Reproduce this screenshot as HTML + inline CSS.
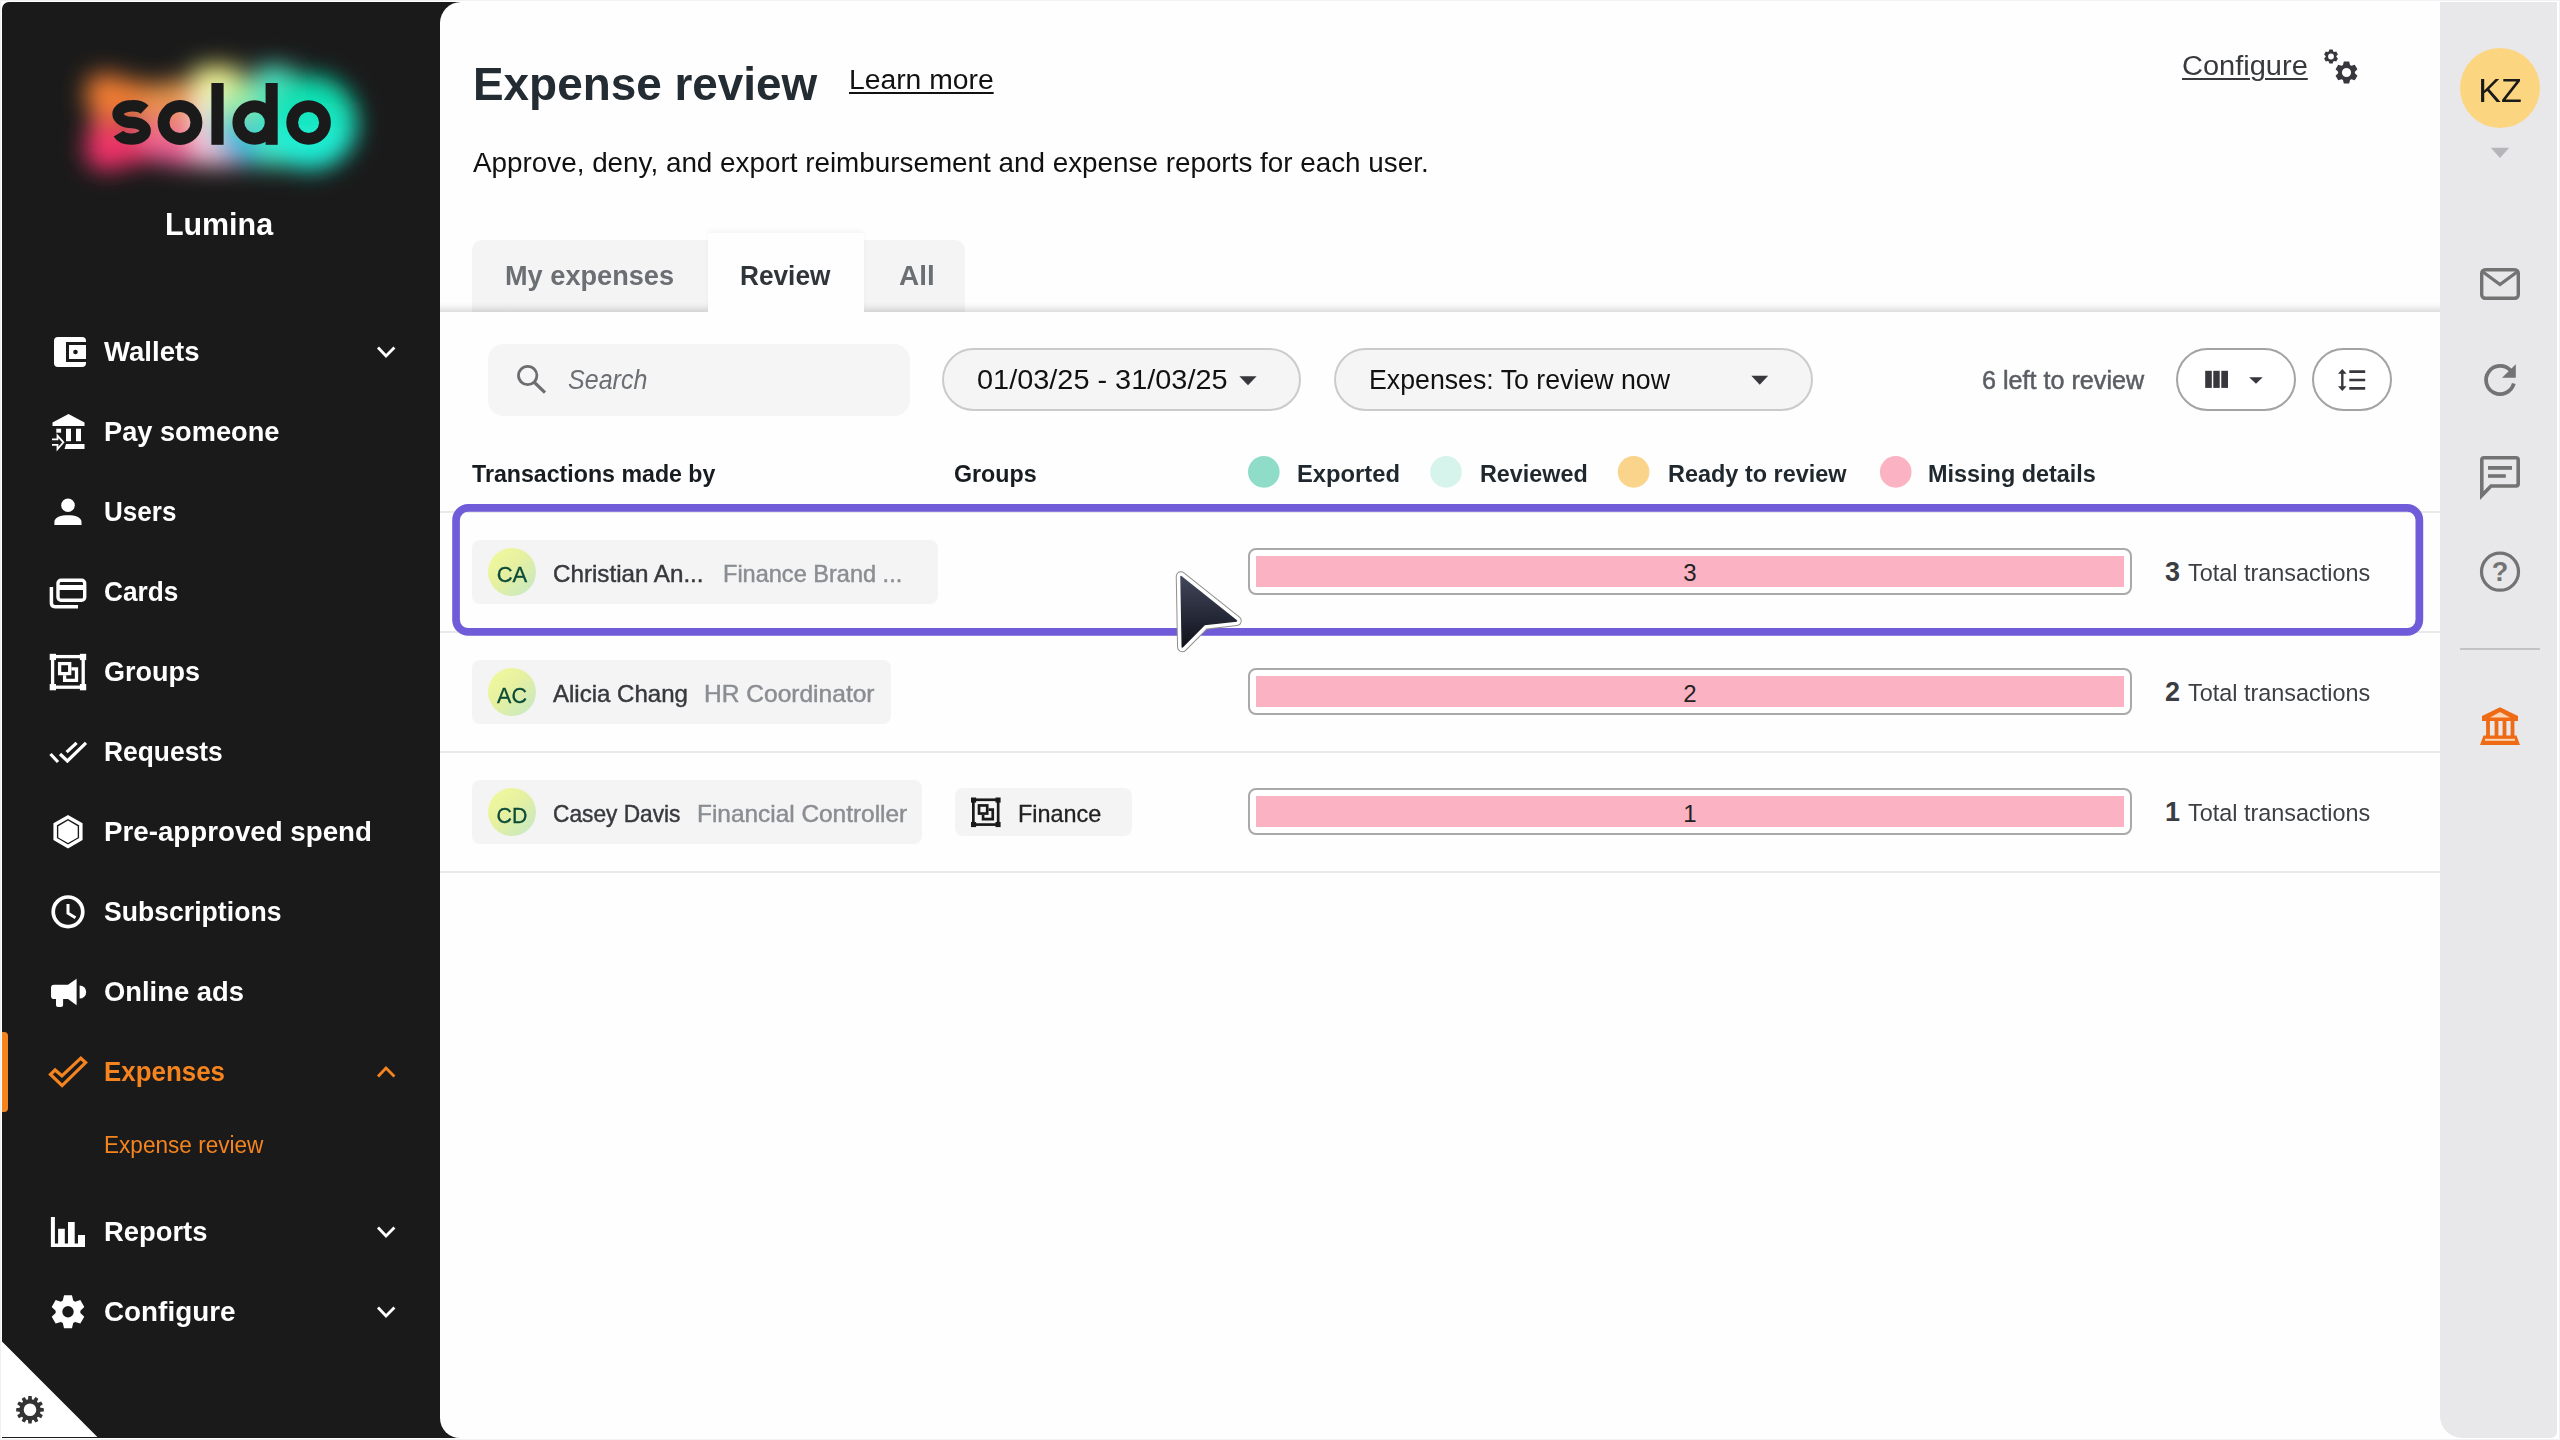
<!DOCTYPE html>
<html><head><meta charset="utf-8">
<style>
*{box-sizing:border-box;margin:0;padding:0}
html,body{width:2560px;height:1440px;overflow:hidden;background:#f1f1f3;font-family:"Liberation Sans",sans-serif}
.a{position:absolute}
.t{position:absolute;line-height:1;white-space:nowrap}
svg{position:absolute;left:0;top:0;overflow:visible}
</style></head><body>
<div class="a" style="left:1px;top:1px;width:2558px;height:1438px;background:#fff"></div>
<div class="a" style="left:2px;top:2px;width:480px;height:1435.5px;background:#1a1a1a;border-top-left-radius:7px"></div>
<div class="a" style="left:440px;top:2px;width:2060px;height:1435.5px;background:#fefefe;border-radius:21px 0 0 20px"></div>
<div class="a" style="left:2440px;top:2px;width:116.5px;height:1435.5px;background:#e8e8ea;border-radius:0 0 6px 22px"></div>
<svg width="480" height="300" style="left:0;top:0">
<defs>
<filter id="gb" x="-50%" y="-50%" width="200%" height="200%"><feGaussianBlur stdDeviation="11.5"/></filter>
<linearGradient id="g1" x1="0" y1="0" x2="0" y2="1"><stop offset="0" stop-color="#f08030"/><stop offset="1" stop-color="#f0306a"/></linearGradient>
<linearGradient id="g2" x1="0" y1="0" x2="0" y2="1"><stop offset="0" stop-color="#e89848"/><stop offset="1" stop-color="#f0609a"/></linearGradient>
<linearGradient id="g3" x1="0" y1="0" x2="0" y2="1"><stop offset="0" stop-color="#f0f070"/><stop offset="0.5" stop-color="#f4f0f0"/><stop offset="1" stop-color="#f0b0d0"/></linearGradient>
<linearGradient id="g4" x1="0" y1="0" x2="0" y2="1"><stop offset="0" stop-color="#a0f0a0"/><stop offset="1" stop-color="#30b0e0"/></linearGradient>
<linearGradient id="g5" x1="0" y1="0" x2="0" y2="1"><stop offset="0" stop-color="#10e0b0"/><stop offset="1" stop-color="#20f0d8"/></linearGradient>
</defs>
<g filter="url(#gb)">
<rect x="86" y="74" width="40" height="40" rx="14" fill="#f07a30"/>
<rect x="86" y="122" width="42" height="48" rx="16" fill="#f0306a"/>
<path d="M144.6,109.6 A14,8.4 0 0,0 132,105.7 A14,8.4 0 0,0 118,114.1 A14,8.4 0 0,0 132,122.5 A13.7,8.3 0 0,1 145.2,130.8 A13.7,8.3 0 0,1 131.5,139.1 A13.7,8.3 0 0,1 118.6,133.6" fill="none" stroke="url(#g1)" stroke-width="50"/>
<circle cx="180" cy="122.5" r="21" fill="none" stroke="url(#g2)" stroke-width="44"/>
<rect x="194" y="66" width="46" height="100" fill="url(#g3)"/>
<circle cx="254.5" cy="122.5" r="21" fill="none" stroke="url(#g4)" stroke-width="44"/>
<rect x="255" y="66" width="38" height="100" fill="#50e0c0"/>
<circle cx="310" cy="122.5" r="24" fill="none" stroke="url(#g5)" stroke-width="46"/>
</g></svg>
<div class="t" style="left:68.50px;top:209.35px;width:300px;text-align:center;font-size:31px;font-weight:bold;color:#fff;font-style:normal;transform:scaleX(0.9818);transform-origin:center top;">Lumina</div>
<div class="t" style="left:104.00px;top:338.46px;font-size:27.8px;font-weight:bold;color:#fff;font-style:normal;transform:scaleX(0.9914);transform-origin:left top;">Wallets</div>
<div class="t" style="left:104.00px;top:418.46px;font-size:27.8px;font-weight:bold;color:#fff;font-style:normal;transform:scaleX(0.9789);transform-origin:left top;">Pay someone</div>
<div class="t" style="left:104.00px;top:498.46px;font-size:27.8px;font-weight:bold;color:#fff;font-style:normal;transform:scaleX(0.9366);transform-origin:left top;">Users</div>
<div class="t" style="left:104.00px;top:578.46px;font-size:27.8px;font-weight:bold;color:#fff;font-style:normal;transform:scaleX(0.9440);transform-origin:left top;">Cards</div>
<div class="t" style="left:104.00px;top:658.46px;font-size:27.8px;font-weight:bold;color:#fff;font-style:normal;transform:scaleX(0.9715);transform-origin:left top;">Groups</div>
<div class="t" style="left:104.00px;top:738.46px;font-size:27.8px;font-weight:bold;color:#fff;font-style:normal;transform:scaleX(0.9493);transform-origin:left top;">Requests</div>
<div class="t" style="left:104.00px;top:818.46px;font-size:27.8px;font-weight:bold;color:#fff;font-style:normal;transform:scaleX(0.9970);transform-origin:left top;">Pre-approved spend</div>
<div class="t" style="left:104.00px;top:898.46px;font-size:27.8px;font-weight:bold;color:#fff;font-style:normal;transform:scaleX(0.9574);transform-origin:left top;">Subscriptions</div>
<div class="t" style="left:104.00px;top:978.46px;font-size:27.8px;font-weight:bold;color:#fff;font-style:normal;transform:scaleX(0.9847);transform-origin:left top;">Online ads</div>
<div class="t" style="left:104.00px;top:1058.46px;font-size:27.8px;font-weight:bold;color:#f5841f;font-style:normal;transform:scaleX(0.9319);transform-origin:left top;">Expenses</div>
<div class="t" style="left:103.50px;top:1134.10px;font-size:23.5px;font-weight:normal;color:#f5841f;font-style:normal;transform:scaleX(0.9607);transform-origin:left top;">Expense review</div>
<div class="t" style="left:104.00px;top:1218.46px;font-size:27.8px;font-weight:bold;color:#fff;font-style:normal;transform:scaleX(0.9849);transform-origin:left top;">Reports</div>
<div class="t" style="left:104.00px;top:1298.46px;font-size:27.8px;font-weight:bold;color:#fff;font-style:normal;transform:scaleX(1.0016);transform-origin:left top;">Configure</div>
<div class="a" style="left:2px;top:1032px;width:6px;height:80px;background:#f5841f;border-radius:0 4px 4px 0"></div>
<div class="t" style="left:472.50px;top:60.85px;font-size:46px;font-weight:bold;color:#232b33;font-style:normal;transform:scaleX(0.9973);transform-origin:left top;">Expense review</div>
<div class="t" style="left:849.00px;top:67.34px;font-size:27px;font-weight:normal;color:#111;font-style:normal;transform:scaleX(1.0477);transform-origin:left top;text-decoration:underline;text-decoration-thickness:2px;text-underline-offset:3px">Learn more</div>
<div class="t" style="left:473.00px;top:148.70px;font-size:27.4px;font-weight:normal;color:#111;font-style:normal;transform:scaleX(1.0162);transform-origin:left top;">Approve, deny, and export reimbursement and expense reports for each user.</div>
<div class="t" style="left:2182.30px;top:52.74px;font-size:27px;font-weight:normal;color:#37393c;font-style:normal;transform:scaleX(1.0743);transform-origin:left top;text-decoration:underline;text-decoration-thickness:2px;text-underline-offset:3px">Configure</div>
<div class="a" style="left:472px;top:240px;width:236px;height:72px;background:#f4f4f5;border-top-left-radius:10px"></div>
<div class="a" style="left:864px;top:240px;width:101px;height:72px;background:#f4f4f5;border-top-right-radius:10px"></div>
<div class="a" style="left:440px;top:302px;width:2000px;height:10px;background:linear-gradient(to bottom, rgba(0,0,0,0) 0%, rgba(0,0,0,0.03) 40%, rgba(0,0,0,0.13) 100%)"></div>
<div class="a" style="left:708px;top:233px;width:156px;height:79px;background:#fefefe;box-shadow:0 -3px 5px rgba(0,0,0,0.035)"></div>
<div class="t" style="left:505.20px;top:262.32px;font-size:27.5px;font-weight:bold;color:#6b6e73;font-style:normal;transform:scaleX(0.9876);transform-origin:left top;">My expenses</div>
<div class="t" style="left:740.00px;top:262.32px;font-size:27.5px;font-weight:bold;color:#30353a;font-style:normal;transform:scaleX(0.9536);transform-origin:left top;">Review</div>
<div class="t" style="left:899.40px;top:262.32px;font-size:27.5px;font-weight:bold;color:#6b6e73;font-style:normal;transform:scaleX(1.0149);transform-origin:left top;">All</div>
<div class="a" style="left:488px;top:344px;width:422px;height:72px;background:#f5f5f6;border-radius:16px"></div>
<div class="t" style="left:568.00px;top:366.81px;font-size:26.8px;font-weight:normal;color:#6b6e72;font-style:italic;transform:scaleX(0.9345);transform-origin:left top;">Search</div>
<div class="a" style="left:942px;top:348px;width:359px;height:63px;background:#f5f5f6;border:2px solid #cbcbcb;border-radius:32px"></div>
<div class="t" style="left:977.00px;top:366.54px;font-size:27px;font-weight:normal;color:#111;font-style:normal;transform:scaleX(1.0699);transform-origin:left top;">01/03/25 - 31/03/25</div>
<div class="a" style="left:1334px;top:348px;width:479px;height:63px;background:#f5f5f6;border:2px solid #cbcbcb;border-radius:32px"></div>
<div class="t" style="left:1368.80px;top:366.94px;font-size:27px;font-weight:normal;color:#111;font-style:normal;transform:scaleX(0.9896);transform-origin:left top;">Expenses: To review now</div>
<div class="t" style="left:1982.00px;top:368.01px;font-size:25.5px;font-weight:normal;color:#5a5e63;font-style:normal;transform:scaleX(0.9860);transform-origin:left top;-webkit-text-stroke:0.5px #5a5e63">6 left to review</div>
<div class="a" style="left:2176px;top:348px;width:120px;height:63px;background:#fff;border:2px solid #a3a3a3;border-radius:32px"></div>
<div class="a" style="left:2312px;top:348px;width:80px;height:63px;background:#fff;border:2px solid #a3a3a3;border-radius:32px"></div>
<div class="t" style="left:472.30px;top:461.97px;font-size:24.6px;font-weight:bold;color:#161c20;font-style:normal;transform:scaleX(0.9422);transform-origin:left top;">Transactions made by</div>
<div class="t" style="left:954.00px;top:461.97px;font-size:24.6px;font-weight:bold;color:#161c20;font-style:normal;transform:scaleX(0.9444);transform-origin:left top;">Groups</div>
<div class="t" style="left:1297.00px;top:461.97px;font-size:24.6px;font-weight:bold;color:#1f282e;font-style:normal;transform:scaleX(0.9659);transform-origin:left top;">Exported</div>
<div class="t" style="left:1479.70px;top:461.97px;font-size:24.6px;font-weight:bold;color:#1f282e;font-style:normal;transform:scaleX(0.9494);transform-origin:left top;">Reviewed</div>
<div class="t" style="left:1667.80px;top:461.97px;font-size:24.6px;font-weight:bold;color:#1f282e;font-style:normal;transform:scaleX(0.9533);transform-origin:left top;">Ready to review</div>
<div class="t" style="left:1928.00px;top:461.97px;font-size:24.6px;font-weight:bold;color:#1f282e;font-style:normal;transform:scaleX(0.9523);transform-origin:left top;">Missing details</div>
<div class="a" style="left:440px;top:511px;width:2000px;height:2px;background:#e9e9ea"></div>
<div class="a" style="left:440px;top:631px;width:2000px;height:2px;background:#e9e9ea"></div>
<div class="a" style="left:440px;top:751px;width:2000px;height:2px;background:#e9e9ea"></div>
<div class="a" style="left:440px;top:871px;width:2000px;height:2px;background:#e9e9ea"></div>
<div class="a" style="left:472px;top:540px;width:466px;height:64px;background:#f4f4f5;border-radius:8px"></div>
<div class="a" style="left:488px;top:547.5px;width:48px;height:48px;border-radius:50%;background:linear-gradient(135deg,#f3fa9c 0%,#e6f0a0 45%,#c2e8c8 100%)"></div>
<div class="t" style="left:482.10px;top:564.45px;width:60px;text-align:center;font-size:22.5px;font-weight:normal;color:#0b4a37;font-style:normal;transform:scaleX(0.9786);transform-origin:center top;-webkit-text-stroke:0.3px #0b4a37">CA</div>
<div class="t" style="left:553.30px;top:561.78px;font-size:24px;font-weight:normal;color:#37393d;font-style:normal;transform:scaleX(1.0077);transform-origin:left top;-webkit-text-stroke:0.45px #37393d">Christian An...</div>
<div class="t" style="left:722.80px;top:561.78px;font-size:24px;font-weight:normal;color:#8a8d91;font-style:normal;transform:scaleX(0.9806);transform-origin:left top;-webkit-text-stroke:0.45px #8a8d91">Finance Brand ...</div>
<div class="a" style="left:1248px;top:548px;width:884px;height:47px;background:#fff;border:2px solid #a9a9a9;border-radius:8px"></div>
<div class="a" style="left:1256px;top:556px;width:868px;height:31px;background:#fbb2c3"></div>
<div class="t" style="left:1660.00px;top:561.18px;width:60px;text-align:center;font-size:24px;font-weight:normal;color:#222;font-style:normal;">3</div>
<div class="t" style="left:2165.00px;top:558.84px;font-size:27px;font-weight:bold;color:#3a3d41;font-style:normal;">3</div>
<div class="t" style="left:2188.00px;top:560.96px;font-size:24.5px;font-weight:normal;color:#3c3f43;font-style:normal;transform:scaleX(0.9559);transform-origin:left top;">Total transactions</div>
<div class="a" style="left:472px;top:660px;width:419px;height:64px;background:#f4f4f5;border-radius:8px"></div>
<div class="a" style="left:488px;top:667.9px;width:48px;height:48px;border-radius:50%;background:linear-gradient(135deg,#f3fa9c 0%,#e6f0a0 45%,#c2e8c8 100%)"></div>
<div class="t" style="left:482.10px;top:684.80px;width:60px;text-align:center;font-size:22.5px;font-weight:normal;color:#0b4a37;font-style:normal;transform:scaleX(0.9546);transform-origin:center top;-webkit-text-stroke:0.3px #0b4a37">AC</div>
<div class="t" style="left:552.50px;top:682.13px;font-size:24px;font-weight:normal;color:#37393d;font-style:normal;transform:scaleX(1.0008);transform-origin:left top;-webkit-text-stroke:0.45px #37393d">Alicia Chang</div>
<div class="t" style="left:703.70px;top:682.13px;font-size:24px;font-weight:normal;color:#8a8d91;font-style:normal;transform:scaleX(1.0227);transform-origin:left top;-webkit-text-stroke:0.45px #8a8d91">HR Coordinator</div>
<div class="a" style="left:1248px;top:668px;width:884px;height:47px;background:#fff;border:2px solid #a9a9a9;border-radius:8px"></div>
<div class="a" style="left:1256px;top:676px;width:868px;height:31px;background:#fbb2c3"></div>
<div class="t" style="left:1660.00px;top:681.53px;width:60px;text-align:center;font-size:24px;font-weight:normal;color:#222;font-style:normal;">2</div>
<div class="t" style="left:2165.00px;top:679.19px;font-size:27px;font-weight:bold;color:#3a3d41;font-style:normal;">2</div>
<div class="t" style="left:2188.00px;top:681.31px;font-size:24.5px;font-weight:normal;color:#3c3f43;font-style:normal;transform:scaleX(0.9559);transform-origin:left top;">Total transactions</div>
<div class="a" style="left:472px;top:780px;width:450px;height:64px;background:#f4f4f5;border-radius:8px"></div>
<div class="a" style="left:488px;top:788.0px;width:48px;height:48px;border-radius:50%;background:linear-gradient(135deg,#f3fa9c 0%,#e6f0a0 45%,#c2e8c8 100%)"></div>
<div class="t" style="left:482.10px;top:804.95px;width:60px;text-align:center;font-size:22.5px;font-weight:normal;color:#0b4a37;font-style:normal;transform:scaleX(0.9472);transform-origin:center top;-webkit-text-stroke:0.3px #0b4a37">CD</div>
<div class="t" style="left:552.50px;top:802.28px;font-size:24px;font-weight:normal;color:#37393d;font-style:normal;transform:scaleX(0.9461);transform-origin:left top;-webkit-text-stroke:0.45px #37393d">Casey Davis</div>
<div class="t" style="left:696.70px;top:802.28px;font-size:24px;font-weight:normal;color:#8a8d91;font-style:normal;transform:scaleX(1.0167);transform-origin:left top;-webkit-text-stroke:0.45px #8a8d91">Financial Controller</div>
<div class="a" style="left:955px;top:788px;width:177px;height:48px;background:#f4f4f5;border-radius:8px"></div>
<div class="t" style="left:1018.40px;top:802.28px;font-size:24px;font-weight:normal;color:#222;font-style:normal;transform:scaleX(0.9758);transform-origin:left top;-webkit-text-stroke:0.3px #222">Finance</div>
<div class="a" style="left:1248px;top:788px;width:884px;height:47px;background:#fff;border:2px solid #a9a9a9;border-radius:8px"></div>
<div class="a" style="left:1256px;top:796px;width:868px;height:31px;background:#fbb2c3"></div>
<div class="t" style="left:1660.00px;top:801.68px;width:60px;text-align:center;font-size:24px;font-weight:normal;color:#222;font-style:normal;">1</div>
<div class="t" style="left:2165.00px;top:799.34px;font-size:27px;font-weight:bold;color:#3a3d41;font-style:normal;">1</div>
<div class="t" style="left:2188.00px;top:801.46px;font-size:24.5px;font-weight:normal;color:#3c3f43;font-style:normal;transform:scaleX(0.9559);transform-origin:left top;">Total transactions</div>
<div class="a" style="left:2460px;top:48px;width:80px;height:80px;border-radius:50%;background:#fcd581"></div>
<div class="t" style="left:2449.90px;top:73.21px;width:100px;text-align:center;font-size:34px;font-weight:normal;color:#1a1a1a;font-style:normal;transform:scaleX(1.0030);transform-origin:center top;">KZ</div>
<div class="t" style="left:2480.00px;top:559.14px;width:40px;text-align:center;font-size:27px;font-weight:bold;color:#737373;font-style:normal;">?</div>
<div class="a" style="left:2460px;top:648px;width:80px;height:2px;background:#c3c3c6"></div>
<svg width="2560" height="1440"><path fill="none" stroke="#1a1a1a" stroke-width="11.4" stroke-linecap="butt" d="M144.6,109.6 A14,8.4 0 0,0 132,105.7 A14,8.4 0 0,0 118,114.1 A14,8.4 0 0,0 132,122.5 A13.7,8.3 0 0,1 145.2,130.8 A13.7,8.3 0 0,1 131.5,139.1 A13.7,8.3 0 0,1 118.6,133.6"/><circle cx="180" cy="122.5" r="16.45" fill="none" stroke="#1a1a1a" stroke-width="11.9"/><rect x="211.4" y="83" width="12.2" height="61.8" fill="#1a1a1a"/><circle cx="254.6" cy="122.5" r="16.2" fill="none" stroke="#1a1a1a" stroke-width="12"/><rect x="265.6" y="83" width="12.1" height="61.8" fill="#1a1a1a"/><circle cx="308.6" cy="122.5" r="16.4" fill="none" stroke="#1a1a1a" stroke-width="11.8"/><path fill="none" stroke="#fff" stroke-width="2.8" d="M378,347.5 L386,356 L394.4,347.5"/><path fill="none" stroke="#fff" stroke-width="2.8" d="M378,1227.5 L386,1236 L394.4,1227.5"/><path fill="none" stroke="#fff" stroke-width="2.8" d="M378,1307.5 L386,1316 L394.4,1307.5"/><path fill="none" stroke="#f5841f" stroke-width="2.8" d="M378,1076.5 L386,1068 L394.4,1076.5"/><rect x="54" y="337" width="32" height="30" rx="4" fill="#fff"/><rect x="66" y="342" width="22" height="20" fill="#1a1a1a"/><rect x="69" y="345" width="17" height="14" fill="#fff"/><circle cx="75.5" cy="352" r="2.3" fill="#1a1a1a"/><path fill="#fff" d="M68.5,414 L84.5,422.5 L84.5,426 L52.5,426 L52.5,422.5 Z"/><rect x="56.3" y="428.7" width="4.8" height="4" fill="#fff"/><rect x="66" y="428.7" width="5" height="12.5" fill="#fff"/><rect x="76" y="428.7" width="5" height="12.5" fill="#fff"/><path fill="#fff" d="M66,444 L84.5,444 L84.5,449 L64.5,449 Z"/><path fill="none" stroke="#fff" stroke-width="1.8" d="M52,439.3 L57.5,439.3 L57.5,435.6 L63.4,442.3 L57.5,449 L57.5,444.8 L52,444.8"/><circle cx="68" cy="505.2" r="6.8" fill="#fff"/><path fill="#fff" d="M54.4,525 L54.4,522 C54.4,517 61,515.2 68,515.2 C75,515.2 81.5,517 81.5,522 L81.5,525 Z"/><rect x="58" y="580.2" width="26.7" height="20" rx="3" fill="none" stroke="#fff" stroke-width="3.4"/><rect x="59" y="585" width="25" height="5" fill="#fff"/><path fill="none" stroke="#fff" stroke-width="3.5" d="M51.4,587 L51.4,603 Q51.4,606.7 55,606.7 L78,606.7"/><rect x="52.6" y="656.6" width="30.6" height="30.6" fill="none" stroke="#fff" stroke-width="3.3"/><rect x="49.7" y="653.8" width="6.3" height="6.3" fill="#fff"/><rect x="79.9" y="653.8" width="6.3" height="6.3" fill="#fff"/><rect x="49.7" y="684" width="6.3" height="6.3" fill="#fff"/><rect x="79.9" y="684" width="6.3" height="6.3" fill="#fff"/><path fill="none" stroke="#fff" stroke-width="3.3" d="M71.4,668.8 L76.5,668.8 L76.5,680.4 L64.6,680.4 L64.6,675.3"/><rect x="59.6" y="663.6" width="10.1" height="10" fill="none" stroke="#fff" stroke-width="3.3"/><path fill="none" stroke="#fff" stroke-width="3.2" stroke-linecap="butt" d="M50.5,754 L58,762"/><path fill="none" stroke="#fff" stroke-width="3.2" d="M60,754 L67.4,761 L86,742.8"/><path fill="none" stroke="#fff" stroke-width="3.2" d="M66.6,752.2 L76.6,742.8"/><polygon points="68.00,816.90 80.82,824.30 80.82,839.10 68.00,846.50 55.18,839.10 55.18,824.30" fill="none" stroke="#fff" stroke-width="3.5"/><polygon points="68.00,820.60 77.70,826.20 77.70,837.40 68.00,843.00 58.30,837.40 58.30,826.20" fill="#fff"/><circle cx="68" cy="911.8" r="14.8" fill="none" stroke="#fff" stroke-width="3.7"/><path fill="none" stroke="#fff" stroke-width="3" d="M68,904 L68,913.2 L75.5,917.8"/><path fill="#fff" d="M54,984.7 L68,984.7 L76.6,978.8 L76.6,1005.2 L68,999.1 L63.1,999.1 L63.1,1005 Q63.1,1007 61,1007 L58,1007 Q56,1007 56,1005 L56,999.1 L54,999.1 Q51,999.1 51,996 L51,988 Q51,984.7 54,984.7 Z"/><path fill="#fff" d="M79.6,985.4 A6.6,6.6 0 0 1 79.6,998.6 Z"/><path fill="none" stroke="#f5841f" stroke-width="3.2" stroke-linejoin="miter" d="M50.5,1074.4 L55.1,1070 L61.9,1075.8 L80.8,1058.2 L85.6,1062.6 L62.1,1085.6 Z"/><path fill="#fff" d="M50.9,1216.9 L54.9,1216.9 L54.9,1243.5 L58.1,1243.5 L58.1,1228.7 L64.8,1228.7 L64.8,1243.5 L68,1243.5 L68,1221.9 L74.7,1221.9 L74.7,1243.5 L78,1243.5 L78,1235 L85,1235 L85,1246.9 L50.9,1246.9 Z"/><path fill-rule="evenodd" fill="#fff" d="M62.78,1300.55 L64.03,1295.27 L71.97,1295.27 L73.22,1300.55 L75.13,1301.65 L80.33,1300.10 L84.30,1306.97 L80.35,1310.70 L80.35,1312.90 L84.30,1316.63 L80.33,1323.50 L75.13,1321.95 L73.22,1323.05 L71.97,1328.33 L64.03,1328.33 L62.78,1323.05 L60.87,1321.95 L55.67,1323.50 L51.70,1316.63 L55.65,1312.90 L55.65,1310.70 L51.70,1306.97 L55.67,1300.10 L60.87,1301.65 Z M73.70,1311.80 A5.7,5.7 0 1,0 62.30,1311.80 A5.7,5.7 0 1,0 73.70,1311.80 Z"/><path fill="#fff" d="M2,1341.6 L97.4,1437 L2,1437 Z"/><path fill-rule="evenodd" fill="#333" d="M28.01,1399.39 L28.33,1396.00 L31.67,1396.00 L31.99,1399.39 L33.49,1399.79 L35.45,1397.01 L38.35,1398.68 L36.93,1401.78 L38.02,1402.87 L41.12,1401.45 L42.79,1404.35 L40.01,1406.31 L40.41,1407.81 L43.80,1408.13 L43.80,1411.47 L40.41,1411.79 L40.01,1413.29 L42.79,1415.25 L41.12,1418.15 L38.02,1416.73 L36.93,1417.82 L38.35,1420.92 L35.45,1422.59 L33.49,1419.81 L31.99,1420.21 L31.67,1423.60 L28.33,1423.60 L28.01,1420.21 L26.51,1419.81 L24.55,1422.59 L21.65,1420.92 L23.07,1417.82 L21.98,1416.73 L18.88,1418.15 L17.21,1415.25 L19.99,1413.29 L19.59,1411.79 L16.20,1411.47 L16.20,1408.13 L19.59,1407.81 L19.99,1406.31 L17.21,1404.35 L18.88,1401.45 L21.98,1402.87 L23.07,1401.78 L21.65,1398.68 L24.55,1397.01 L26.51,1399.79 Z M36.30,1409.80 A6.3,6.3 0 1,0 23.70,1409.80 A6.3,6.3 0 1,0 36.30,1409.80 Z"/><path fill-rule="evenodd" fill="#37373d" d="M2328.73,51.60 L2329.32,49.50 L2332.68,49.50 L2333.27,51.60 L2334.11,52.08 L2336.22,51.54 L2337.90,54.46 L2336.38,56.02 L2336.38,56.98 L2337.90,58.54 L2336.22,61.46 L2334.11,60.92 L2333.27,61.40 L2332.68,63.50 L2329.32,63.50 L2328.73,61.40 L2327.89,60.92 L2325.78,61.46 L2324.10,58.54 L2325.62,56.98 L2325.62,56.02 L2324.10,54.46 L2325.78,51.54 L2327.89,52.08 Z M2333.90,56.50 A2.9,2.9 0 1,0 2328.10,56.50 A2.9,2.9 0 1,0 2333.90,56.50 Z"/><path fill-rule="evenodd" fill="#37373d" d="M2342.96,64.88 L2343.84,61.41 L2349.16,61.41 L2350.04,64.88 L2351.33,65.63 L2354.77,64.65 L2357.43,69.26 L2354.87,71.75 L2354.87,73.25 L2357.43,75.74 L2354.77,80.35 L2351.33,79.37 L2350.04,80.12 L2349.16,83.59 L2343.84,83.59 L2342.96,80.12 L2341.67,79.37 L2338.23,80.35 L2335.57,75.74 L2338.13,73.25 L2338.13,71.75 L2335.57,69.26 L2338.23,64.65 L2341.67,65.63 Z M2351.10,72.50 A4.6,4.6 0 1,0 2341.90,72.50 A4.6,4.6 0 1,0 2351.10,72.50 Z"/><circle cx="527.7" cy="375.5" r="9.2" fill="none" stroke="#6b6d70" stroke-width="2.8"/><path d="M534.5,382.5 L545,392.6" stroke="#6b6d70" stroke-width="3.2"/><path d="M1239.4,376.3 L1256.6,376.3 L1248,385.2 Z" fill="#37373d"/><path d="M1751.3,375.8 L1768.2,375.8 L1759.75,384.8 Z" fill="#37373d"/><rect x="2205.2" y="370.8" width="6.6" height="17.1" fill="#37373d"/><rect x="2213.3" y="370.8" width="6.4" height="17.1" fill="#37373d"/><rect x="2221.3" y="370.8" width="6.7" height="17.1" fill="#37373d"/><path d="M2249.2,377.3 L2262.7,377.3 L2256,383.8 Z" fill="#37373d"/><path d="M2342.3,371 L2342.3,389" stroke="#37373d" stroke-width="2.4"/><path d="M2338,373.8 L2342.3,369 L2346.6,373.8 Z M2338,386.2 L2342.3,391 L2346.6,386.2 Z" fill="#37373d"/><path d="M2349.3,371.6 L2365.2,371.6 M2349.3,380 L2365.2,380 M2349.3,388.4 L2365.2,388.4" stroke="#37373d" stroke-width="2.6"/><circle cx="1263.8" cy="471.9" r="15.8" fill="#8fdcc8"/><circle cx="1446" cy="471.9" r="15.8" fill="#d6f4ec"/><circle cx="1633.6" cy="471.9" r="15.8" fill="#f9d48a"/><circle cx="1895.7" cy="471.9" r="15.8" fill="#fbb3c3"/><g transform="translate(971,797.5) scale(0.8108108108108109) translate(-49.7,-653.8)" fill="none" stroke="#1a1a1a"><rect x="52.6" y="656.6" width="30.6" height="30.6" stroke-width="3.3"/><rect x="49.7" y="653.8" width="6.3" height="6.3" fill="#1a1a1a" stroke="none"/><rect x="79.9" y="653.8" width="6.3" height="6.3" fill="#1a1a1a" stroke="none"/><rect x="49.7" y="684" width="6.3" height="6.3" fill="#1a1a1a" stroke="none"/><rect x="79.9" y="684" width="6.3" height="6.3" fill="#1a1a1a" stroke="none"/><path stroke-width="3.3" d="M71.4,668.8 L76.5,668.8 L76.5,680.4 L64.6,680.4 L64.6,675.3"/><rect x="59.6" y="663.6" width="10.1" height="10" stroke-width="3.3"/></g><rect x="456.05" y="507.85" width="1963.3" height="124.1" rx="12.2" fill="none" stroke="#705cd9" stroke-width="7.7"/><path d="M2490.8,147.8 L2509.2,147.8 L2500,158 Z" fill="#b5b5b9"/><rect x="2481.7" y="269.7" width="36.6" height="28.6" rx="3.5" fill="none" stroke="#737373" stroke-width="3.4"/><path d="M2483,272 L2500,284.5 L2517,272" fill="none" stroke="#737373" stroke-width="3.4"/><path d="M2513.8,383.6 A14.1,14.1 0 1 1 2510.6,370.5" fill="none" stroke="#737373" stroke-width="3.8"/><path d="M2502,377.7 L2515.8,377.7 L2515.8,364.2 Z" fill="#737373"/><path d="M2481.8,495.6 L2481.8,460 Q2481.8,457.8 2484,457.8 L2516,457.8 Q2518.2,457.8 2518.2,460 L2518.2,483.8 Q2518.2,486 2516,486 L2491,486 Z" fill="none" stroke="#737373" stroke-width="3.6" stroke-linejoin="miter"/><rect x="2488" y="466" width="24" height="3.8" fill="#737373"/><rect x="2488" y="474.2" width="17.8" height="3.6" fill="#737373"/><circle cx="2500" cy="571.7" r="18.5" fill="none" stroke="#737373" stroke-width="3.2"/><path d="M2500,707.2 L2518,716 L2518,721 L2482,721 L2482,716 Z" fill="#ee6a15"/><path d="M2500,712 L2490,717.5 L2510,717.5 Z" fill="#fbd5b5"/><rect x="2486.1" y="720" width="3.8" height="16" fill="#ee6a15"/><rect x="2494.6" y="720" width="3.8" height="16" fill="#ee6a15"/><rect x="2502.6" y="720" width="3.8" height="16" fill="#ee6a15"/><rect x="2510.6" y="720" width="3.8" height="16" fill="#ee6a15"/><path d="M2483.5,735.5 L2516.5,735.5 L2520,745 L2480,745 Z" fill="#ee6a15"/><rect x="2485" y="738.8" width="30" height="2" fill="#fbd5b5"/><defs><linearGradient id="cg" x1="0" y1="0" x2="0" y2="1"><stop offset="0" stop-color="#41465a"/><stop offset="1" stop-color="#10121b"/></linearGradient></defs><path d="M1181,576.5 L1182.3,647 L1204.6,624.5 L1236.5,620.9 Z" fill="#8f8f8f" stroke="#8f8f8f" stroke-width="10.5" stroke-linejoin="round"/><path d="M1181,576.5 L1182.3,647 L1204.6,624.5 L1236.5,620.9 Z" fill="#fff" stroke="#fff" stroke-width="8.5" stroke-linejoin="round"/><path d="M1181,576.5 L1182.3,647 L1204.6,624.5 L1236.5,620.9 Z" fill="url(#cg)" stroke="url(#cg)" stroke-width="1.5" stroke-linejoin="round"/></svg>
</body></html>
